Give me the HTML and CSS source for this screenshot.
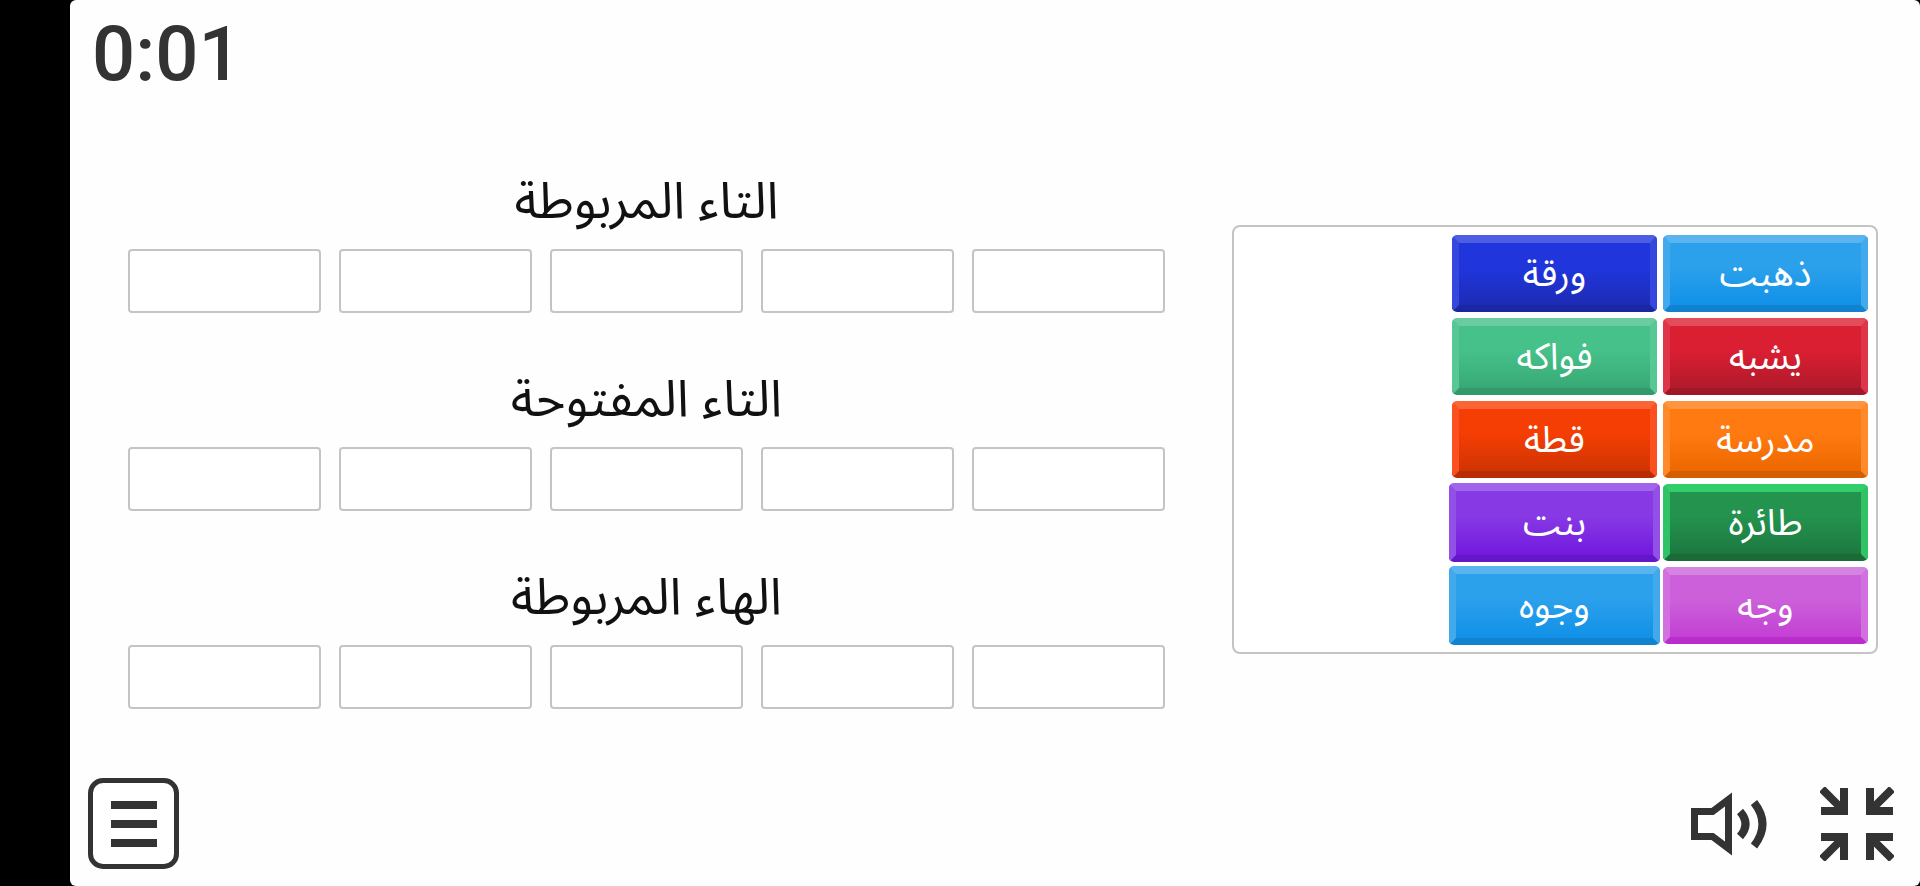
FILE: index.html
```html
<!DOCTYPE html>
<html lang="ar">
<head>
<meta charset="utf-8">
<meta name="viewport" content="width=device-width, initial-scale=1">
<title>التاء المربوطة</title>
<link rel="stylesheet" href="styles.css">
</head>
<body>
<div class="stage">
  <header class="top"><time class="timer">0:01</time></header>
  <main class="board">
    <div class="groups">
      <section class="group">
        <h2 class="group-title" dir="rtl">التاء المربوطة</h2>
        <div class="slots"><div class="slot"></div><div class="slot"></div><div class="slot"></div><div class="slot"></div><div class="slot"></div></div>
      </section>
      <section class="group">
        <h2 class="group-title" dir="rtl">التاء المفتوحة</h2>
        <div class="slots"><div class="slot"></div><div class="slot"></div><div class="slot"></div><div class="slot"></div><div class="slot"></div></div>
      </section>
      <section class="group">
        <h2 class="group-title" dir="rtl">الهاء المربوطة</h2>
        <div class="slots"><div class="slot"></div><div class="slot"></div><div class="slot"></div><div class="slot"></div><div class="slot"></div></div>
      </section>
    </div>
    <div class="tray" dir="rtl">
      <button class="tile sky" type="button">ذهبت</button>
      <button class="tile blue" type="button">ورقة</button>
      <button class="tile red" type="button">يشبه</button>
      <button class="tile mint" type="button">فواكه</button>
      <button class="tile amber" type="button">مدرسة</button>
      <button class="tile orange" type="button">قطة</button>
      <button class="tile green" type="button">طائرة</button>
      <button class="tile purple large" type="button">بنت</button>
      <button class="tile pink" type="button">وجه</button>
      <button class="tile sky large" type="button">وجوه</button>
    </div>
  </main>
  <footer class="controls">
    <button class="menu" type="button" aria-label="القائمة">
      <svg width="46" height="46" viewBox="0 0 46 46" fill="#333"><path d="M0 0h46v8H0zM0 19h46v8H0zM0 38h46v8H0z"/></svg>
    </button>
    <div class="tools">
      <button class="tool" type="button" aria-label="الصوت">
        <svg width="78" height="66" viewBox="0 0 78 66" fill="none" stroke="#333" stroke-width="7"><path d="M4.500 20.500H22.500L38.500 8.500V57.500L22.500 45.500H4.500Z"/><path d="M50 20.500Q61 33 50 45.500M64 11.500Q81 33 64 55" stroke-width="8"/></svg>
      </button>
      <button class="tool" type="button" aria-label="إنهاء ملء الشاشة">
        <svg width="74" height="74" viewBox="0 0 74 74" fill="none" stroke="#333" stroke-width="8"><path d="M1 24H24V1M2 2L23 23M73 24H50V1M72 2L51 23M1 50H24V73M2 72L23 51M73 50H50V73M72 72L51 51"/></svg>
      </button>
    </div>
  </footer>
</div>
</body>
</html>
```
FILE: styles.css
```css
* { box-sizing: border-box; }
body {
  margin: 0;
  padding-left: 70px;
  background: #000;
  font-family: "Noto Sans Arabic", "Noto Sans", "DejaVu Sans", sans-serif;
}
button { margin: 0; border: 0; padding: 0; font: inherit; cursor: pointer; }
svg { display: block; }
.stage {
  min-height: 100vh;
  display: flex;
  flex-direction: column;
  justify-content: space-between;
  background: #fefefe;
  border-radius: 6px;
}
.top { padding: 14px 22px 0; }
.timer {
  display: block;
  font: 500 76px/80px Roboto, sans-serif;
  color: #333;
}
.board {
  display: grid;
  grid-template-columns: 1037fr 646fr;
  gap: 67px;
  align-items: center;
  padding: 6px 42px 0 58px;
}
.groups { display: grid; gap: 54px; }
.group-title {
  margin: 0 0 14px;
  font-size: 51px;
  line-height: 66px;
  font-weight: 400;
  text-align: center;
  color: #111;
}
.slots { display: grid; grid-template-columns: repeat(5, 1fr); gap: 18px; }
.slot { height: 64px; border: 2px solid #c4c4c4; border-radius: 4px; background: #fff; }
.tray {
  display: grid;
  grid-template-columns: repeat(2, 205px);
  grid-auto-rows: 77px;
  gap: 6px;
  padding: 8px;
  border: 2px solid #c4c4c4;
  border-radius: 8px;
  background: #fff;
}
.tile {
  border: 7px solid var(--side);
  border-top: 8px solid var(--top);
  border-bottom-color: var(--edge);
  border-radius: 5px;
  background: linear-gradient(var(--from) 40%, var(--to)) padding-box;
  color: #fff;
  font-size: 37px;
  line-height: 48px;
}
.large { margin: -1px -3px; }
.sky { --from: #2ba0eb; --to: #1191e8; --top: #5ab4ef; --side: #42a9ec; --edge: #1082cf; }
.blue { --from: #2036dc; --to: #1d2bb5; --top: #4d5ee3; --side: #3547dd; --edge: #1927a2; }
.red { --from: #db1f32; --to: #b01a2b; --top: #e34c5b; --side: #df3548; --edge: #a1172a; }
.mint { --from: #45c189; --to: #38a976; --top: #6acda1; --side: #57c795; --edge: #33986a; }
.amber { --from: #ff7a10; --to: #ec6800; --top: #ff9540; --side: #ff8a2b; --edge: #d55f00; }
.orange { --from: #f43e03; --to: #cf3403; --top: #fb6535; --side: #fb5020; --edge: #b92d02; }
.green { --from: #23934e; --to: #1d7840; --top: #32ce6c; --side: #2fc366; --edge: #1b6b39; }
.purple { --from: #8739e4; --to: #7219df; --top: #a066ea; --side: #9350e7; --edge: #6416c9; }
.pink { --from: #cc60da; --to: #c340d4; --top: #d684e2; --side: #d170de; --edge: #b82dcc; }
.controls {
  display: flex;
  justify-content: space-between;
  align-items: center;
  padding: 0 26px 17px 18px;
}
.menu {
  display: grid;
  place-items: center;
  width: 91px;
  height: 91px;
  border: 5px solid #333;
  border-radius: 15px;
  background: #fff;
}
.tools { display: flex; align-items: center; gap: 52px; }
.tool { background: none; }
```
